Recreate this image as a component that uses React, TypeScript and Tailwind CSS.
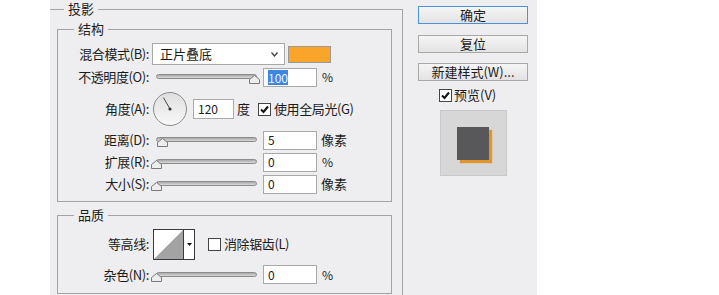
import type { ReactNode } from "react";

const Label = ({ children }: { children: ReactNode }) => (
  <span className="w-[91px] shrink-0 text-right tracking-[-0.4px]">{children}</span>
);

const Slider = ({ thumb }: { thumb: number }) => (
  <div className="relative ml-[2px] h-[14px] w-[107px] shrink-0">
    <div className="ml-[5px] mt-[4px] h-[5px] w-[101px] rounded-full border border-[#8c8c8c] bg-linear-to-b from-[#a8a8a8] to-[#dadada]" />
    <svg className="absolute top-[5px]" style={{ left: thumb }} width="11" height="9" viewBox="0 0 11 9">
      <path d="M0.5 8.5V4.5L5.5 0.5L10.5 4.5V8.5Z" fill="#ededed" stroke="#7a7a7a" />
    </svg>
  </div>
);

const NumBox = ({ children, className = "" }: { children: ReactNode; className?: string }) => (
  <div
    className={`flex h-[19px] w-[54px] shrink-0 items-center border border-[#a9a9a9] bg-white pl-[4px] text-[12px] ${className}`}
  >
    {children}
  </div>
);

const Check = ({ checked }: { checked?: boolean }) => (
  <span className="flex h-[13px] w-[13px] shrink-0 items-center justify-center border border-[#444] bg-white">
    {checked && (
      <svg width="11" height="11" viewBox="0 0 11 11">
        <path d="M2 5.5L4.5 8L9 2.5" fill="none" stroke="#111" strokeWidth="2" />
      </svg>
    )}
  </span>
);

const Btn = ({ children, primary }: { children: ReactNode; primary?: boolean }) => (
  <button
    className={`flex h-[18px] w-[110px] items-center justify-center border bg-linear-to-b from-[#f5f5f5] to-[#e3e3e3] text-[13px] leading-[16px] ${
      primary ? "border-[#4a92dc]" : "border-[#a8a8a8]"
    }`}
  >
    {children}
  </button>
);

export default function App() {
  return (
    <div className="flex h-[295px] w-[719px] bg-white font-['Noto_Sans_CJK_SC','Liberation_Sans',sans-serif] text-[13px] leading-[18px] text-[#1b1b1b]">
      <div className="ml-[50px] flex h-[295px] w-[487px] overflow-hidden bg-[#eeeef0]">
        {/* left: 投影 */}
        <fieldset className="h-[320px] w-[353px] shrink-0 border-t border-r border-[#a3a3a3]">
          <legend className="ml-[14px] px-[4px]">投影</legend>

          <fieldset className="ml-[7px] mr-[10px] mt-[2px] border border-[#a3a3a3] pb-[6px] pt-[5px]">
            <legend className="ml-[16px] px-[4px]">结构</legend>

            <div className="flex h-[22px] items-center">
              <Label>混合模式(B):</Label>
              <div className="ml-[3px] flex h-[22px] w-[133px] items-center justify-between border border-[#a8a8a8] bg-white pl-[7px] pr-[6px]">
                <span>正片叠底</span>
                <svg width="7" height="5" viewBox="0 0 7 5">
                  <path d="M0.5 0.5L3.5 4L6.5 0.5" fill="none" stroke="#444" strokeWidth="1.3" />
                </svg>
              </div>
              <span className="ml-[3px] h-[17px] w-[43px] border border-[#9a9a9a] bg-[#f9a52a]" />
            </div>

            <div className="flex h-[24px] items-center">
              <Label>不透明度(O):</Label>
              <Slider thumb={98} />
              <NumBox className="ml-[5px]">
                <span className="bg-[#3d86e0] leading-[15px] text-[#eef4ff]">100</span>
              </NumBox>
              <span className="ml-[5px] text-[12px]">%</span>
            </div>

            <div className="flex h-[40px] items-center">
              <Label>角度(A):</Label>
              <svg className="ml-[3px] shrink-0" width="36" height="36" viewBox="0 0 36 36">
                <defs>
                  <linearGradient id="dial" x1="0" y1="0" x2="0" y2="1">
                    <stop offset="0" stopColor="#dedede" />
                    <stop offset="1" stopColor="#f9f9f9" />
                  </linearGradient>
                </defs>
                <circle cx="18" cy="18" r="16.5" fill="url(#dial)" stroke="#8a8a8a" />
                <line x1="18" y1="18" x2="11.5" y2="6.7" stroke="#444" strokeWidth="1" />
                <circle cx="18" cy="18" r="1.6" fill="#333" />
              </svg>
              <div className="ml-[5px] flex h-[20px] w-[41px] shrink-0 items-center border border-[#a9a9a9] bg-white pl-[4px] text-[12px]">
                120
              </div>
              <span className="ml-[3px]">度</span>
              <span className="ml-[8px]">
                <Check checked />
              </span>
              <span className="ml-[3px] tracking-[-0.4px]">使用全局光(G)</span>
            </div>

            <div className="flex h-[22px] items-center">
              <Label>距离(D):</Label>
              <Slider thumb={6} />
              <NumBox className="ml-[5px]">5</NumBox>
              <span className="ml-[4px]">像素</span>
            </div>

            <div className="flex h-[22px] items-center">
              <Label>扩展(R):</Label>
              <Slider thumb={0} />
              <NumBox className="ml-[5px]">0</NumBox>
              <span className="ml-[5px] text-[12px]">%</span>
            </div>

            <div className="flex h-[22px] items-center">
              <Label>大小(S):</Label>
              <Slider thumb={0} />
              <NumBox className="ml-[5px]">0</NumBox>
              <span className="ml-[4px]">像素</span>
            </div>
          </fieldset>

          <fieldset className="ml-[7px] mr-[10px] mt-[4px] border border-[#a3a3a3] pb-[8px]">
            <legend className="ml-[16px] px-[4px]">品质</legend>

            <div className="flex h-[40px] items-center">
              <Label>等高线:</Label>
              <div className="ml-[4px] flex h-[31px] w-[42px] shrink-0 border border-[#3a3a3a] bg-white">
                <svg width="29" height="29" viewBox="0 0 29 29">
                  <polygon points="0,29 29,0 29,29" fill="#a3a3a3" />
                </svg>
                <div className="flex w-[11px] items-center justify-center border-l border-[#3a3a3a]">
                  <svg width="5" height="3" viewBox="0 0 5 3">
                    <polygon points="0,0 5,0 2.5,3" fill="#111" />
                  </svg>
                </div>
              </div>
              <span className="ml-[13px]">
                <Check />
              </span>
              <span className="ml-[3px] tracking-[-0.4px]">消除锯齿(L)</span>
            </div>

            <div className="flex h-[21px] items-center">
              <Label>杂色(N):</Label>
              <Slider thumb={0} />
              <NumBox className="ml-[5px]">0</NumBox>
              <span className="ml-[5px] text-[12px]">%</span>
            </div>
          </fieldset>
        </fieldset>

        {/* right: buttons and preview */}
        <div className="flex flex-col pl-[15px] pt-[6px]">
          <Btn primary>确定</Btn>
          <div className="mt-[11px]">
            <Btn>复位</Btn>
          </div>
          <div className="mt-[10px]">
            <Btn>新建样式(W)...</Btn>
          </div>
          <div className="ml-[21px] mt-[7px] flex h-[14px] items-center">
            <Check checked />
            <span className="ml-[2px]">预览(V)</span>
          </div>
          <div className="ml-[22px] mt-[8px] h-[66px] w-[67px] border border-[#c9c9c9] bg-[#d7d7d8] pl-[16px] pt-[16px]">
            <div className="h-[33px] w-[32px] bg-[#58575a] shadow-[3px_3px_1px_#e0962a]" />
          </div>
        </div>
      </div>
    </div>
  );
}
